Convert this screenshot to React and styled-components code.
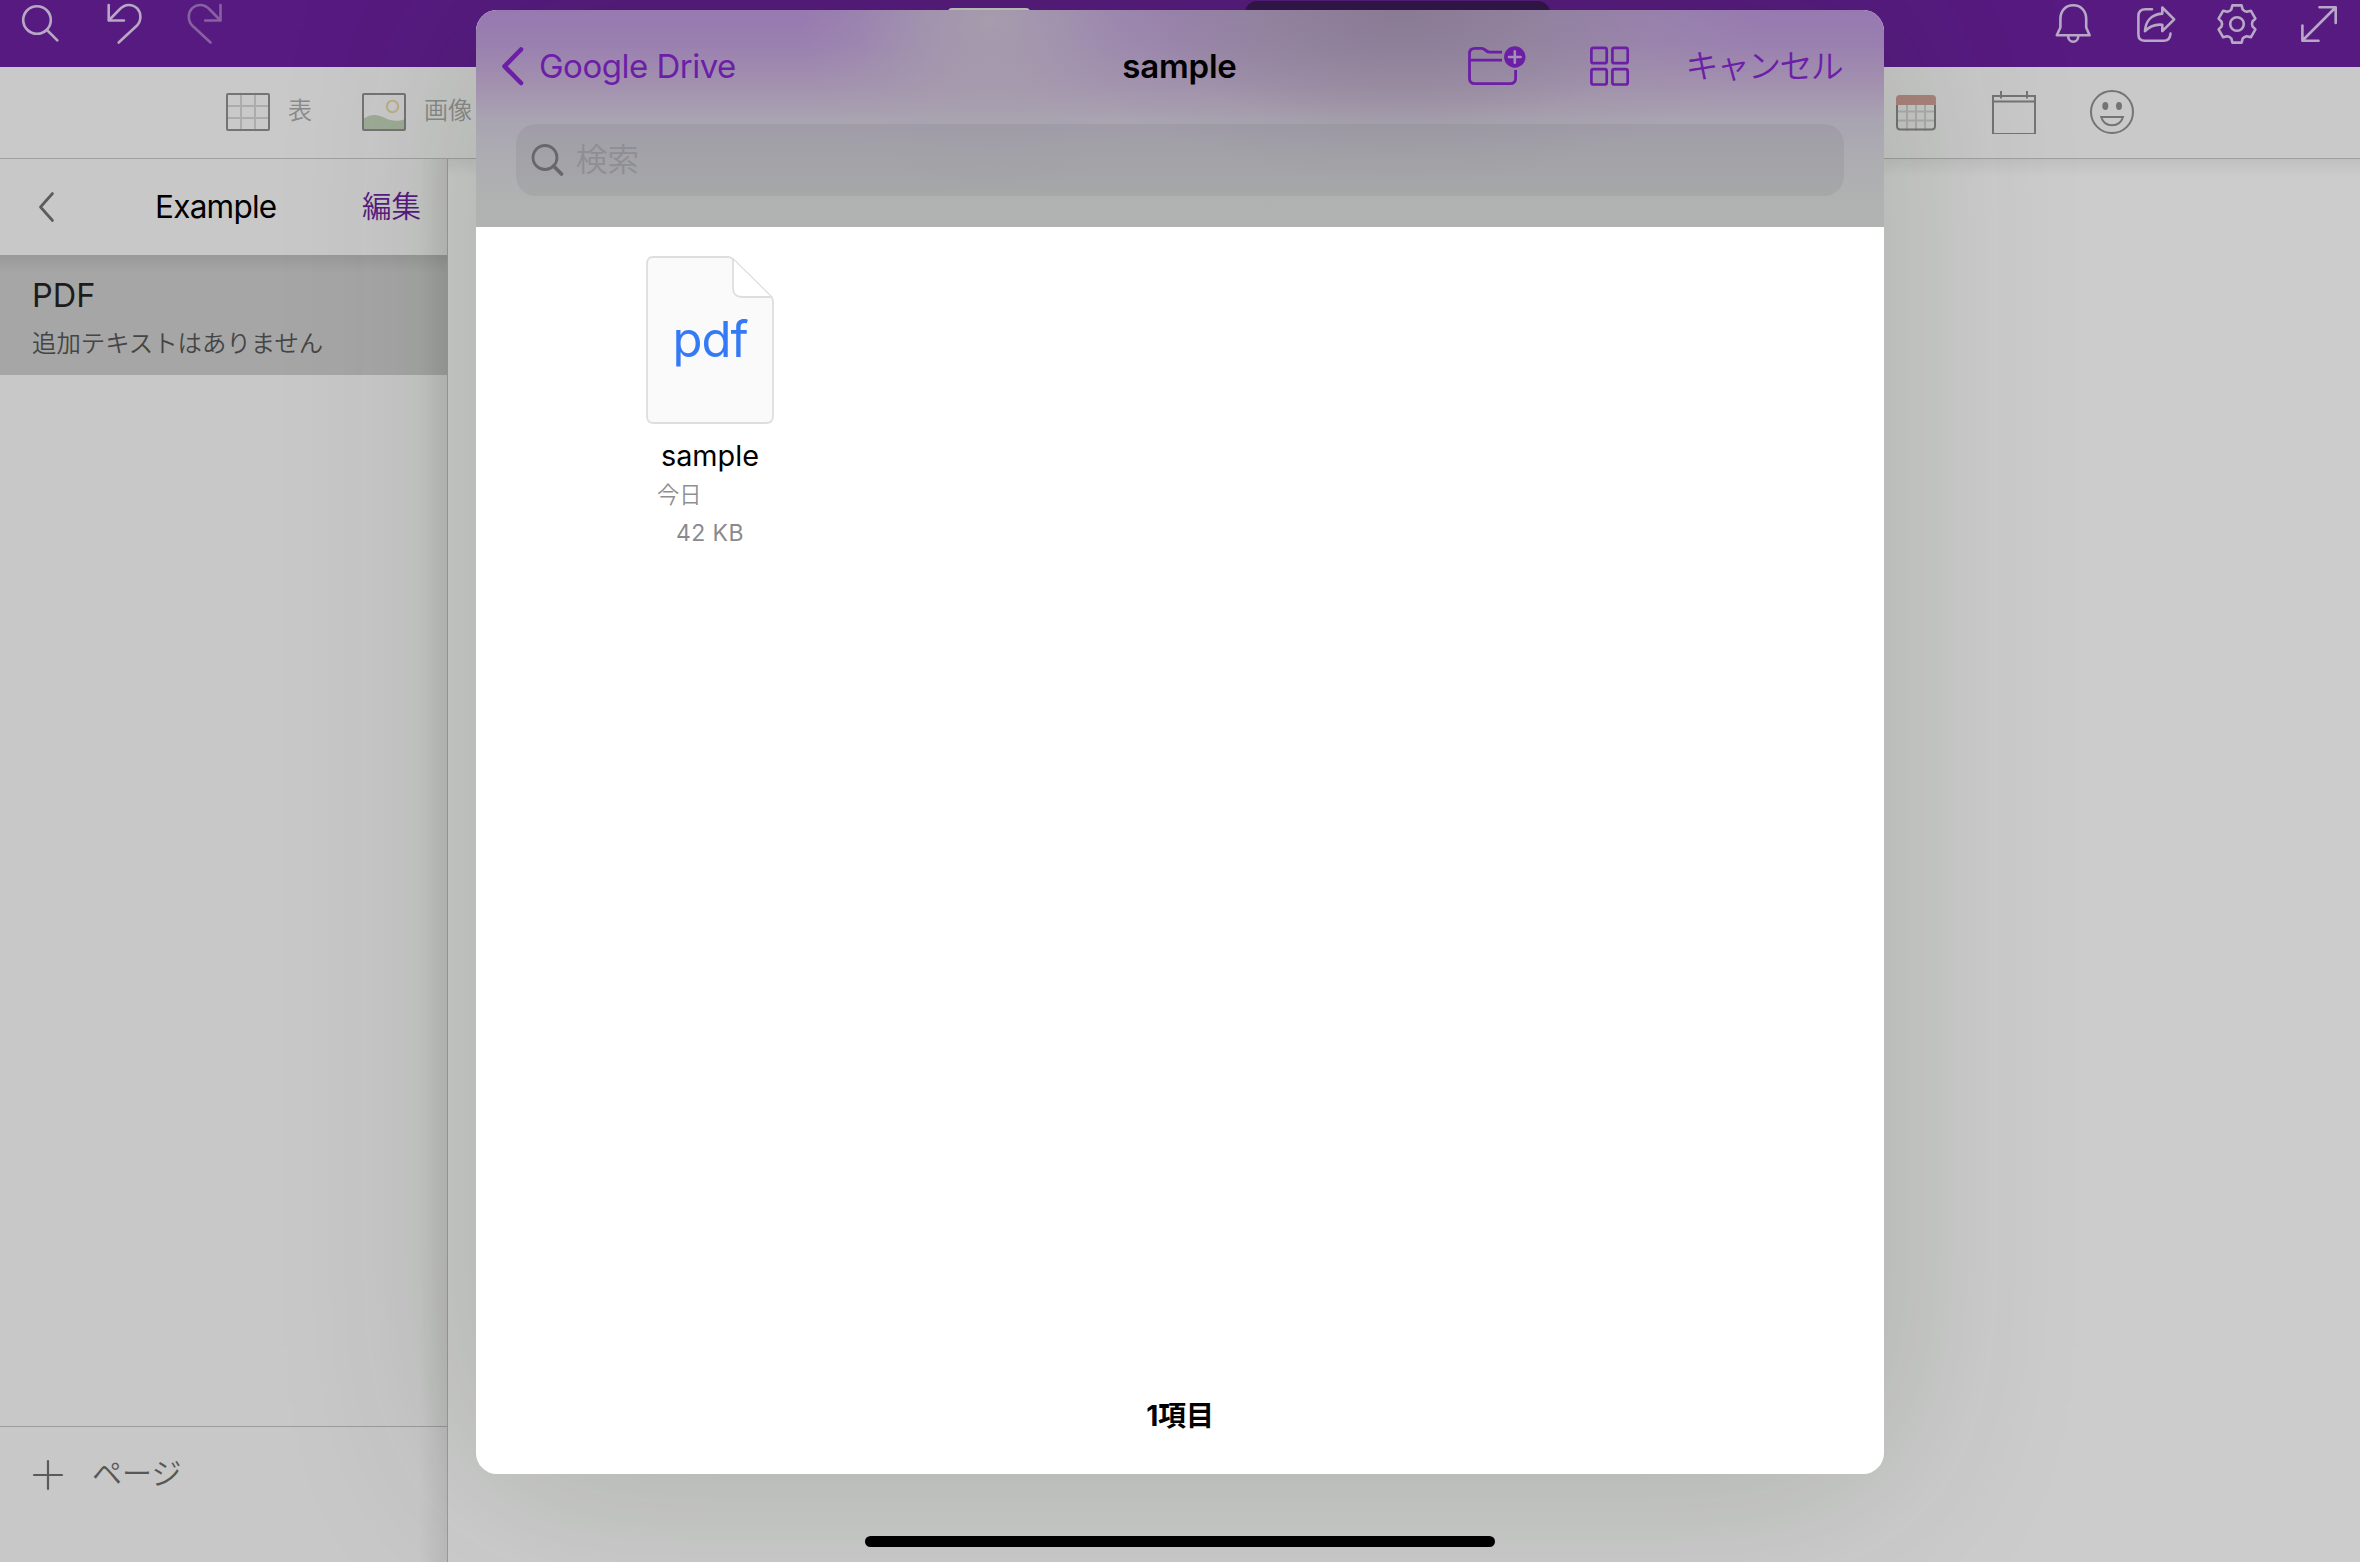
import React from "react";
import styled, { createGlobalStyle } from "styled-components";

const FONT = `Inter, "Noto Sans CJK JP", sans-serif`;
const ACCENT = "#6c1fa6";

const GlobalStyle = createGlobalStyle`
  * { box-sizing: border-box; }
  body { margin: 0; overflow: hidden; background: #cccccc; font-family: ${FONT}; }
`;

const Screen = styled.div`
  position: relative;
  width: 2360px;
  height: 1562px;
  display: flex;
  flex-direction: column;
  overflow: hidden;
  background: #cccccc;
`;

const Text = styled.span`
  font-size: ${(p) => p.$size}px;
  font-weight: ${(p) => p.$weight || 400};
  letter-spacing: ${(p) => p.$spacing || 0}px;
  color: ${(p) => p.$color || "#000"};
  line-height: ${(p) => p.$line || 1.2};
  white-space: nowrap;
`;

const Icon = styled.svg`
  display: block;
  flex: none;
  width: ${(p) => p.$w}px;
  height: ${(p) => p.$h}px;
  fill: none;
  stroke: ${(p) => p.$color};
  stroke-width: ${(p) => p.$stroke || 2.3};
  stroke-linecap: round;
  stroke-linejoin: round;
  opacity: ${(p) => p.$opacity || 1};
`;

/* Title bar */
const TitleBar = styled.header`
  display: grid;
  grid-template-columns: 948px 82px 215px 305px 1fr;
  height: 67px;
  background: #571a80;
`;
const ToolGroup = styled.div`
  display: flex;
  gap: ${(p) => p.$gap}px;
  padding-left: ${(p) => p.$left || 0}px;
  grid-column: ${(p) => p.$col};
`;
const ActiveTab = styled.div`
  grid-column: 2;
  height: 40px;
  margin-top: 8px;
  border-radius: 4px;
  background: #c6c8c3;
`;
const DarkTab = styled.div`
  grid-column: 4;
  height: 54px;
  margin-top: 1px;
  border-radius: 12px;
  background: #33144a;
`;

/* Ribbon */
const Ribbon = styled.div`
  display: flex;
  align-items: center;
  justify-content: space-between;
  height: 92px;
  padding: 0 226px 2px;
  background: #c9c9c9;
  border-bottom: 1px solid #a0a0a0;
`;
const RibbonGroup = styled.div`
  display: flex;
  align-items: center;
  gap: ${(p) => p.$gap}px;
  height: 100%;
`;
const RibbonItem = styled.div`
  display: flex;
  align-items: center;
  gap: 18px;
`;

/* Main area */
const Main = styled.div`
  position: relative;
  display: flex;
  flex: 1;
  &::before {
    content: "";
    position: absolute;
    inset: 0 0 auto 0;
    height: 18px;
    background: linear-gradient(rgba(0, 0, 0, 0.06), transparent);
  }
`;
const Sidebar = styled.aside`
  position: relative;
  display: flex;
  flex-direction: column;
  width: 448px;
  background: #c8c8c8;
  border-right: 1px solid #9a9a9a;
  &::after {
    content: "";
    position: absolute;
    inset: 0 0 0 auto;
    width: 28px;
    background: linear-gradient(to right, transparent, rgba(0, 0, 0, 0.07));
  }
`;
const SideHeader = styled.div`
  display: grid;
  grid-template-columns: 155px 1fr auto;
  align-items: center;
  height: 96px;
  padding-right: 26px;
`;
const BackButton = styled.div`
  padding-left: 36px;
`;
const PageRow = styled.div`
  display: flex;
  flex-direction: column;
  height: 120px;
  padding: 20px 0 0 32px;
  background: linear-gradient(rgba(0, 0, 0, 0.08), transparent 18px) #a6a6a6;
`;
const SideFooter = styled.div`
  display: flex;
  align-items: flex-start;
  gap: 28px;
  height: 136px;
  margin-top: auto;
  padding: 28px 0 0 32px;
  border-top: 1px solid #9c9c9c;
`;

/* File picker sheet */
const Sheet = styled.section`
  position: absolute;
  left: 476px;
  top: 10px;
  width: 1408px;
  height: 1464px;
  display: flex;
  flex-direction: column;
  border-radius: 21px;
  overflow: hidden;
  background: #fff;
`;
const SheetShadow = styled.div`
  position: absolute;
  left: 476px;
  top: 10px;
  width: 1408px;
  height: 1464px;
  border-radius: 21px;
  box-shadow: 0 0 200px rgba(16, 44, 6, 0.18);
`;
const SheetHeader = styled.div`
  height: 217px;
  background:
    radial-gradient(ellipse 190px 170px at 514px 10px, rgba(168, 162, 172, 0.85), rgba(168, 162, 172, 0.6) 35%, rgba(168, 162, 172, 0.2) 70%, transparent),
    radial-gradient(ellipse 360px 170px at 925px 0, rgba(136, 122, 144, 0.9), rgba(144, 134, 150, 0.65) 40%, rgba(155, 148, 160, 0.25) 72%, transparent),
    linear-gradient(#9779b0, #9a80b0 35px, #a391af 75px, #a9a4b1 110px, #adadb1 150px, #b0b2b1 190px, #b1b3b1);
`;
const NavRow = styled.div`
  display: grid;
  grid-template-columns: 1fr auto 1fr;
  align-items: center;
  height: 114px;
  padding: 0 42px 0 24px;
`;
const NavBack = styled.div`
  display: flex;
  align-items: center;
  gap: 11px;
`;
const NavTitle = styled.div`
  padding-left: 17px;
`;
const NavActions = styled.div`
  display: flex;
  align-items: center;
  justify-content: flex-end;
`;
const ActionSlot = styled.div`
  margin-right: ${(p) => p.$after}px;
`;
const SearchField = styled.div`
  display: flex;
  align-items: center;
  gap: 11px;
  height: 72px;
  margin: 0 40px;
  padding-left: 15px;
  border-radius: 20px;
  background: rgba(100, 100, 108, 0.13);
`;
const Files = styled.div`
  display: flex;
  flex: 1;
  padding: 28px 0 0 154px;
`;
const FileItem = styled.div`
  display: flex;
  flex-direction: column;
  align-items: center;
  width: 160px;
`;
const FileThumb = styled.div`
  display: grid;
  justify-items: center;
  align-items: center;
  height: 170px;
  margin-bottom: 4px;
  > * { grid-area: 1 / 1; }
`;
const FileDate = styled.div`
  align-self: flex-start;
  margin-top: -5px;
  padding-left: 27px;
  line-height: 36px;
`;
const SheetFooter = styled.div`
  height: 114px;
  padding-top: 40px;
  text-align: center;
`;
const HomeIndicator = styled.div`
  position: absolute;
  left: 865px;
  top: 1536px;
  width: 630px;
  height: 11px;
  border-radius: 6px;
  background: #000;
`;

const LIGHT = "#b7a8c5";
const BarIcon = ({ children, ...rest }) => (
  <Icon $w={44} $h={46} viewBox="0 0 44 46" $color={LIGHT} $stroke={2.6} {...rest}>{children}</Icon>
);

const rotate = (x, y, deg) => {
  const a = (deg * Math.PI) / 180;
  return `${(21 + x * Math.cos(a) - y * Math.sin(a)).toFixed(2)} ${(24 + x * Math.sin(a) + y * Math.cos(a)).toFixed(2)}`;
};
const gearPath =
  [0, 60, 120, 180, 240, 300]
    .map(
      (d, i) =>
        `${i ? "L" : "M"}${rotate(-4.6, -18.6, d)}L${rotate(4.6, -18.6, d)}L${rotate(5.6, -14.6, d)}Q${rotate(7.6, -12.4, d)} ${rotate(9.8, -12.2, d)}`
    )
    .join("") + "Z";

const UNDO = "M7.7 5V20.5H23M7.7 20.5L18 10C21.5 6.2 24.5 5 27.8 5C34.6 5 39.4 10.3 39.4 16.8C39.4 20.2 38.4 23 36 25.5L17.7 42.5";

const RibbonIcon = ({ children, color = "#747474" }) => (
  <Icon $w={44} $h={44} viewBox="0 0 44 44" $color={color} $stroke={2}>{children}</Icon>
);

export default function App() {
  return (
    <Screen>
      <GlobalStyle />
      <TitleBar>
        <ToolGroup $gap={37} $left={20} $col={1}>
          <BarIcon>
            <circle cx="17" cy="20" r="13.8" />
            <path d="M27 30L37.3 40.3" />
          </BarIcon>
          <BarIcon><path d={UNDO} /></BarIcon>
          <BarIcon $opacity={0.5}><path transform="translate(46.2 0) scale(-1 1)" d={UNDO} /></BarIcon>
        </ToolGroup>
        <ActiveTab />
        <DarkTab />
        <ToolGroup $gap={38} $left={502} $col={5}>
          <BarIcon>
            <path d="M4.8 35.3L8.4 27.5V19C8.4 10.8 13.5 5.3 21.2 5.3S34.2 10.8 34.2 19V27.5L37.6 35.3Z" />
            <path d="M16.2 36.5A5 5.2 0 0 0 26.2 36.5" />
          </BarIcon>
          <BarIcon>
            <path d="M18 9.2H11.5Q4.4 9.2 4.4 16V34.5Q4.4 40.8 11 40.8H29.5Q36.2 40.8 36.5 33.5" />
            <path d="M28.3 7.5L40.2 19.3L28.3 31.2V24.8C21 24 16 26 11 31.2C11.5 21.5 17 14.3 28.3 13.6Z" />
          </BarIcon>
          <BarIcon>
            <path d={gearPath} />
            <circle cx="21" cy="24" r="6.8" />
          </BarIcon>
          <BarIcon><path d="M4.5 40.5L37.5 7.5M21.5 7.3H37.7V23M4.4 25.5V40.7H20.5" /></BarIcon>
        </ToolGroup>
      </TitleBar>

      <Ribbon>
        <RibbonGroup $gap={50}>
          <RibbonItem>
            <RibbonIcon>
              <path stroke="#acacac" d="M15 4V40M29 4V40M2 16H42M2 28H42" />
              <rect x="1" y="4" width="42" height="36" rx="1" />
            </RibbonIcon>
            <Text $size={24} $weight={350} $color="#8a8a8a">表</Text>
          </RibbonItem>
          <RibbonItem>
            <RibbonIcon>
              <path fill="#9eac96" stroke="none" d="M2 28.5C9 24 15 24 22 27.5C29 31.5 36 31.5 42 29.5V39H2Z" />
              <circle cx="30.5" cy="16.5" r="5.7" stroke="#bdb083" />
              <rect x="1" y="4" width="42" height="36" rx="1" />
            </RibbonIcon>
            <Text $size={24} $weight={350} $color="#8a8a8a">画像</Text>
          </RibbonItem>
        </RibbonGroup>
        <RibbonGroup $gap={54}>
          <RibbonIcon>
            <path stroke="#adadad" d="M13 14V40M22 14V40M31 14V40M3 21.5H41M3 30.5H41" />
            <path d="M3 13V36Q3 39.5 6.5 39.5H37.5Q41 39.5 41 36V13" />
            <path fill="#ab837c" stroke="none" d="M2 15V9Q2 5 6 5H38Q42 5 42 9V15Z" />
          </RibbonIcon>
          <RibbonIcon>
            <g strokeLinejoin="miter" strokeLinecap="butt">
              <rect x="1" y="6" width="42" height="38" />
              <path d="M1 11.5H43M9 1V8.5M35 1V8.5" />
            </g>
          </RibbonIcon>
          <RibbonIcon>
            <circle cx="22" cy="22" r="21" />
            <ellipse cx="15.3" cy="16" rx="3" ry="4" fill="#747474" stroke="none" />
            <ellipse cx="29" cy="16" rx="3" ry="4" fill="#747474" stroke="none" />
            <path strokeLinejoin="miter" d="M11.2 27H33C31.5 32 27.5 35.3 22 35.3S12.7 32 11.2 27Z" />
          </RibbonIcon>
        </RibbonGroup>
      </Ribbon>

      <Main>
        <Sidebar>
          <SideHeader>
            <BackButton>
              <Icon $w={22} $h={32} viewBox="0 0 22 32" $color="#5c5c5c" $stroke={2.7}>
                <path d="M16.5 2.5L4.5 16L16.5 29.5" />
              </Icon>
            </BackButton>
            <Text $size={31.5} $spacing={-0.75}>Example</Text>
            <Text $size={29.5} $weight={350} $color="#571a80">編集</Text>
          </SideHeader>
          <PageRow>
            <Text $size={32.5} $line={1.3} $color="#1c1c1c">PDF</Text>
            <Text $size={24.4} $weight={350} $line={2.2} $color="#454545">追加テキストはありません</Text>
          </PageRow>
          <SideFooter>
            <Icon $w={32} $h={40} viewBox="0 0 32 40" $color="#5a5a5a" $stroke={2.2}>
              <path d="M2 20H30M16 6V34" />
            </Icon>
            <Text $size={30} $weight={350} $color="#575757">ページ</Text>
          </SideFooter>
        </Sidebar>
      </Main>

      <SheetShadow />
      <Sheet>
        <SheetHeader>
          <NavRow>
            <NavBack>
              <Icon $w={28} $h={40} viewBox="0 0 28 40" $color={ACCENT} $stroke={4.6}>
                <path d="M21 2.5L4.5 19.3L21 36" />
              </Icon>
              <Text $size={33} $spacing={-0.5} $color={ACCENT}>Google Drive</Text>
            </NavBack>
            <NavTitle><Text $size={33} $weight={600} $spacing={-0.2}>sample</Text></NavTitle>
            <NavActions>
              <ActionSlot $after={62}>
                <Icon $w={60} $h={44} viewBox="0 0 60 44" $color={ACCENT} $stroke={2.8}>
                  <path strokeLinecap="butt" d="M35 7.2H22.5C19 7.2 18.5 3.3 14.5 3.3H8Q2.5 3.3 2.5 8.5V33.5Q2.5 38.7 8 38.7H43Q48.6 38.7 48.6 33.5V25M2.5 15.2H35" />
                  <circle cx="47.8" cy="12" r="10.7" fill={ACCENT} stroke="none" />
                  <path stroke="#a38fb2" strokeWidth="2.6" d="M47.8 6.2V17.8M42 12H53.6" />
                </Icon>
              </ActionSlot>
              <ActionSlot $after={54}>
                <Icon $w={42} $h={42} viewBox="0 0 42 42" $color={ACCENT} $stroke={2.7}>
                  <rect x="2.4" y="1.9" width="15.3" height="15.3" rx="2" />
                  <rect x="23.4" y="1.9" width="15.3" height="15.3" rx="2" />
                  <rect x="2.4" y="23.2" width="15.3" height="15.3" rx="2" />
                  <rect x="23.4" y="23.2" width="15.3" height="15.3" rx="2" />
                </Icon>
              </ActionSlot>
              <Text $size={33} $weight={350} $spacing={-1.7} $color={ACCENT}>キャンセル</Text>
            </NavActions>
          </NavRow>
          <SearchField>
            <Icon $w={34} $h={36} viewBox="0 0 34 36" $color="#68676d" $stroke={2.8}>
              <circle cx="14" cy="15.5" r="12" />
              <path strokeWidth="3.8" d="M22.5 24L30.5 32" />
            </Icon>
            <Text $size={31.5} $weight={350} $color="#8f8e93">検索</Text>
          </SearchField>
        </SheetHeader>
        <Files>
          <FileItem>
            <FileThumb>
              <Icon $w={130} $h={170} viewBox="0 0 130 170" $color="#dedede" $stroke={1.8}>
                <path fill="#fafafa" d="M8 2H83Q86 2 88.5 4.5L125 40.5Q128 43 128 47V161Q128 168 121 168H8Q2 168 2 161V9Q2 2 8 2Z" />
                <path fill="#fff" d="M88 4.5V33Q88 42 97 42H126" />
              </Icon>
              <Text $size={49} $spacing={-1} $line={1.15} $color="#3479f6">pdf</Text>
            </FileThumb>
            <Text $size={28.8} $line={1.9}>sample</Text>
            <FileDate><Text $size={22.2} $weight={350} $color="#8f8f93">今日</Text></FileDate>
            <Text $size={23} $spacing={0.4} $line={1.6} $color="#8a8a8e">42 KB</Text>
          </FileItem>
        </Files>
        <SheetFooter><Text $size={28} $weight={700} $spacing={-0.2}>1項目</Text></SheetFooter>
      </Sheet>
      <HomeIndicator />
    </Screen>
  );
}
